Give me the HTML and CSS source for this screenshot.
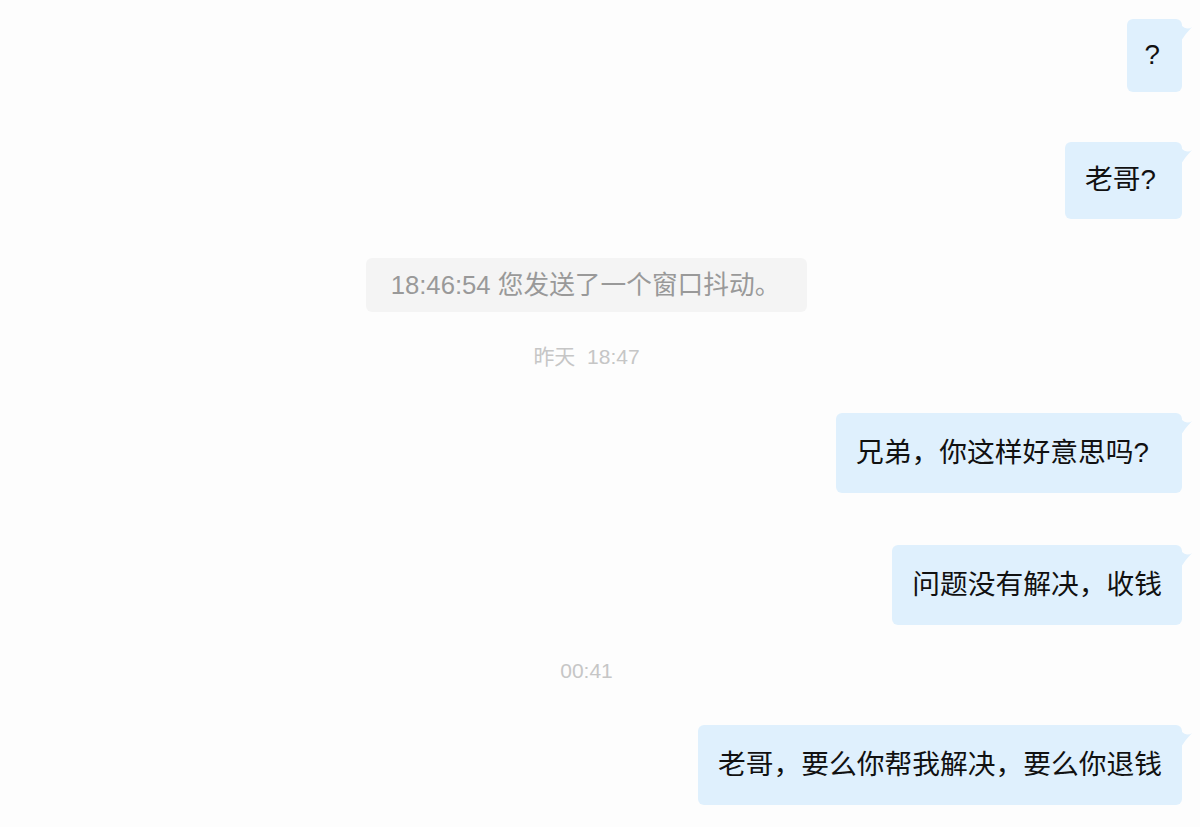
FILE: index.html
```html
<!DOCTYPE html>
<html lang="zh-CN">
<head>
<meta charset="utf-8">
<title>Chat</title>
<link rel="stylesheet" href="styles.css">
</head>
<body>
<div class="chat">
  <div class="row row-first">
    <div class="bubble bubble-q">?<svg class="tail" viewBox="0 0 12 16" width="12" height="16"><path d="M0 0 Q6 6 11 2 Q5 8 0 16 Z"/></svg></div>
  </div>
  <div class="row row-gap50">
    <div class="bubble bubble-mid bubble-pr2">老哥?<svg class="tail" viewBox="0 0 12 16" width="12" height="16"><path d="M0 0 Q6 6 11 2 Q5 8 0 16 Z"/></svg></div>
  </div>
  <div class="center center-sys">
    <div class="system">18:46:54 您发送了一个窗口抖动。</div>
  </div>
  <div class="center center-t1">
    <div class="time">昨天&nbsp;&nbsp;18:47</div>
  </div>
  <div class="row row-gap44">
    <div class="bubble bubble-pr">兄弟，你这样好意思吗?<svg class="tail" viewBox="0 0 12 16" width="12" height="16"><path d="M0 0 Q6 6 11 2 Q5 8 0 16 Z"/></svg></div>
  </div>
  <div class="row row-gap52">
    <div class="bubble">问题没有解决，收钱<svg class="tail" viewBox="0 0 12 16" width="12" height="16"><path d="M0 0 Q6 6 11 2 Q5 8 0 16 Z"/></svg></div>
  </div>
  <div class="center center-t2">
    <div class="time">00:41</div>
  </div>
  <div class="row row-gap42">
    <div class="bubble">老哥，要么你帮我解决，要么你退钱<svg class="tail" viewBox="0 0 12 16" width="12" height="16"><path d="M0 0 Q6 6 11 2 Q5 8 0 16 Z"/></svg></div>
  </div>
</div>
</body>
</html>
```

FILE: styles.css
```css
html, body {
  margin: 0;
  padding: 0;
  background: #fdfdfd;
}
body {
  width: 1200px;
  height: 827px;
  overflow: hidden;
  font-family: "Liberation Sans", "Noto Sans CJK SC", sans-serif;
}
.chat {
  display: flex;
  flex-direction: column;
  padding-top: 19px;
}
.row {
  display: flex;
  justify-content: flex-end;
  padding-right: 18px;
}
.row-gap50 { margin-top: 50px; }
.row-gap44 { margin-top: 44px; }
.row-gap52 { margin-top: 52px; }
.row-gap42 { margin-top: 42px; }
.bubble {
  position: relative;
  background: #dff0fd;
  color: #111;
  font-size: 27.75px;
  line-height: 40px;
  height: 80px;
  box-sizing: border-box;
  padding: 20px 20px;
  border-radius: 6px;
  white-space: nowrap;
}
.bubble-q {
  height: 73px;
  padding: 16px 22px 17px 18px;
}
.bubble-mid {
  height: 77px;
  padding-top: 18px;
  padding-bottom: 19px;
}
.bubble-pr { padding-right: 33px; }
.bubble-pr2 { padding-right: 26px; }
.tail {
  position: absolute;
  left: calc(100% - 1px);
  top: 6px;
  fill: #dff0fd;
}
.center {
  display: flex;
  justify-content: center;
  width: 1173px;
}
.center-sys { margin-top: 39px; }
.center-t1 { margin-top: 33px; }
.center-t2 { margin-top: 34px; }
.system {
  background: #f4f4f4;
  color: #999;
  font-size: 25.7px;
  line-height: 54px;
  height: 54px;
  padding: 0 27px 0 25px;
  border-radius: 6px;
  white-space: nowrap;
}
.time {
  color: #c6c6c6;
  font-size: 21px;
  line-height: 24px;
  white-space: nowrap;
}
```
